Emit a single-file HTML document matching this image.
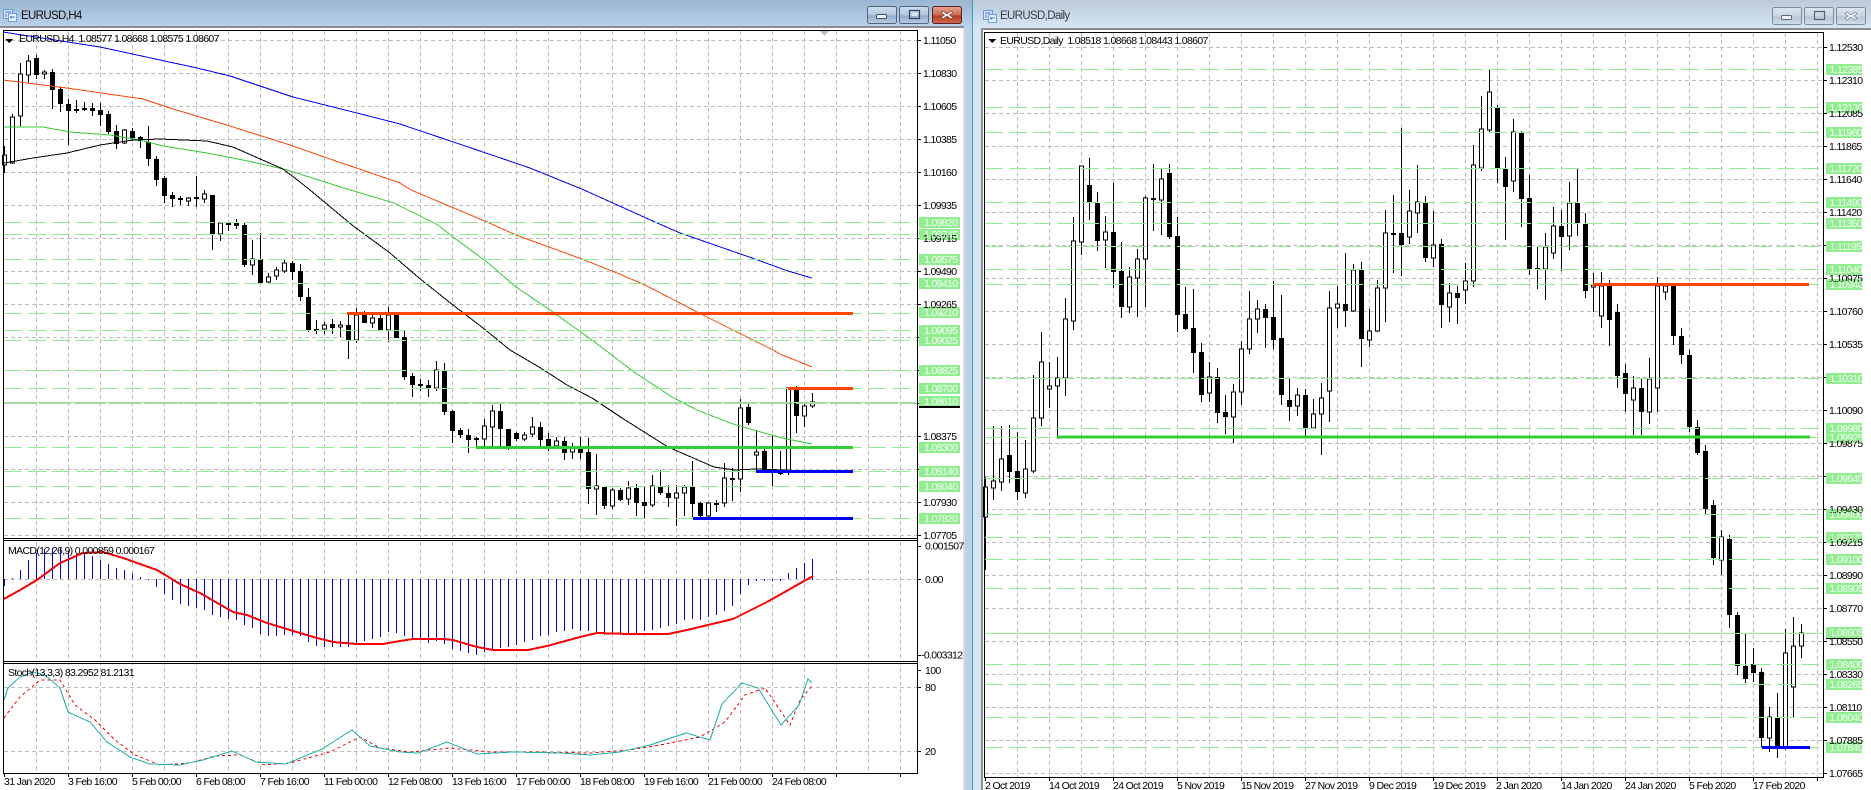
<!DOCTYPE html>
<html><head><meta charset="utf-8"><title>EURUSD</title>
<style>
html,body{margin:0;padding:0;background:#fff;width:1871px;height:790px;overflow:hidden}
svg{display:block}
text{font-family:"Liberation Sans",sans-serif;font-size:10.5px;letter-spacing:-.65px;fill:#000;white-space:pre}
.t{font-size:11.5px;letter-spacing:-.65px}
.g{fill:#f4fff4}
</style></head><body>
<svg width="1871" height="790" viewBox="0 0 1871 790" xmlns="http://www.w3.org/2000/svg">
<defs>
<linearGradient id="a" x1="0" y1="0" x2="0" y2="1"><stop offset="0" stop-color="#9cb5d0"/><stop offset="1" stop-color="#b9d1ea"/></linearGradient>
<linearGradient id="b" x1="0" y1="0" x2="0" y2="1"><stop offset="0" stop-color="#bbc9d9"/><stop offset="1" stop-color="#d6e5f3"/></linearGradient>
<linearGradient id="c" x1="0" y1="0" x2="0" y2="1"><stop offset="0" stop-color="#cfdeee"/><stop offset=".5" stop-color="#b0c6de"/><stop offset=".55" stop-color="#93acc8"/><stop offset="1" stop-color="#b5cce4"/></linearGradient>
<linearGradient id="d" x1="0" y1="0" x2="0" y2="1"><stop offset="0" stop-color="#e6a593"/><stop offset=".5" stop-color="#cf6a50"/><stop offset=".55" stop-color="#b83d20"/><stop offset="1" stop-color="#d0674c"/></linearGradient>
<linearGradient id="e" x1="0" y1="0" x2="0" y2="1"><stop offset="0" stop-color="#dde6ef"/><stop offset=".5" stop-color="#c8d5e2"/><stop offset=".55" stop-color="#b8c7d6"/><stop offset="1" stop-color="#d2dfeb"/></linearGradient>
</defs>

<!-- window chrome -->
<rect width="1871" height="790" fill="#fff"/>
<rect x="0" y="0" width="972" height="790" fill="#b9d1ea"/>
<rect x="0" y="0" width="972" height="27" fill="url(#a)"/>
<rect x="973" y="0" width="898" height="790" fill="#d5e4f2"/>
<rect x="973" y="0" width="898" height="28" fill="url(#b)"/>
<rect x="972" y="0" width="1" height="790" fill="#3aa0b8"/>
<rect x="0" y="27" width="964" height="763" fill="#fff"/>
<rect x="0" y="26" width="964" height="2" fill="#8c8c8c"/>
<rect x="963" y="28" width="2" height="762" fill="#dcdcdc"/>
<rect x="981" y="28" width="890" height="762" fill="#fff"/>
<rect x="981" y="28" width="890" height="2" fill="#8c8c8c"/>
<rect x="981" y="28" width="2" height="762" fill="#8c8c8c"/>

<!-- title left -->
<g shape-rendering="crispEdges">
<rect x="3.5" y="9.5" width="9" height="9" fill="#d5e6f8" stroke="#6f9bd8"/>
<rect x="8.5" y="13.5" width="8" height="8" fill="#e8f2fc" stroke="#6f9bd8"/>
<path d="M5 12h6M10 17h5M6 14v3M11 16v3" stroke="#4a78c8" fill="none"/>
</g>
<text class="t" x="21" y="19" style="fill:#111">EURUSD,H4</text>
<rect x="867.5" y="6.5" width="29" height="17" rx="2" fill="url(#c)" stroke="#52647c"/>
<rect x="876.5" y="14.5" width="10" height="4" rx="1" fill="#eef3f8" stroke="#3e4f66"/>
<rect x="899.5" y="6.5" width="29" height="17" rx="2" fill="url(#c)" stroke="#52647c"/>
<rect x="909.5" y="10.5" width="10" height="8" fill="none" stroke="#33445a" stroke-width="1.2"/>
<rect x="911.5" y="13" width="6" height="3" fill="#dfe8f2"/>
<rect x="932.5" y="6.5" width="29" height="17" rx="2" fill="url(#d)" stroke="#5c2222"/>
<path d="M943 11l4 3 4-3 2 1.5-3.5 2.5 3.5 2.5-2 1.5-4-3-4 3-2-1.5 3.5-2.5-3.5-2.5z" fill="#fff" stroke="#6a2b20" stroke-width=".6"/>

<!-- title right -->
<g shape-rendering="crispEdges">
<rect x="983.5" y="10.5" width="9" height="9" fill="#d5e6f8" stroke="#6f9bd8"/>
<rect x="988.5" y="14.5" width="8" height="8" fill="#e8f2fc" stroke="#6f9bd8"/>
<path d="M985 13h6M990 18h5M986 15v3M991 17v3" stroke="#4a78c8" fill="none"/>
</g>
<text class="t" x="1000" y="19" style="fill:#3a3f45">EURUSD,Daily</text>
<rect x="1772.5" y="7.5" width="29" height="17" rx="2" fill="url(#e)" stroke="#7d8b9a"/>
<rect x="1781.5" y="15.5" width="10" height="4" rx="1" fill="#f2f5f8" stroke="#5d6b7a"/>
<rect x="1804.5" y="7.5" width="29" height="17" rx="2" fill="url(#e)" stroke="#7d8b9a"/>
<rect x="1814.5" y="11.5" width="10" height="8" fill="none" stroke="#55626f" stroke-width="1.2"/>
<rect x="1836.5" y="7.5" width="29" height="17" rx="2" fill="url(#e)" stroke="#7d8b9a"/>
<path d="M1847 12l4 3 4-3 2 1.5-3.5 2.5 3.5 2.5-2 1.5-4-3-4 3-2-1.5 3.5-2.5-3.5-2.5z" fill="#fff" stroke="#66727e" stroke-width=".6"/>

<g shape-rendering="crispEdges" fill="none">

<!-- LEFT grid -->
<path stroke="#bcbcbc" stroke-dasharray="4 3" d="M4 40.5H917M4 73.5H917M4 106.5H917M4 139.5H917M4 172.5H917M4 205.5H917M4 238.5H917M4 271.5H917M4 304.5H917M4 337.5H917M4 370.5H917M4 403.5H917M4 436.5H917M4 469.5H917M4 502.5H917M4 535.5H917M4 579.5H917M4 687.5H917M4 751.5H917"/>
<path stroke="#bcbcbc" stroke-dasharray="4 3" d="M36.5 31V773M68.5 31V773M100.5 31V773M132.5 31V773M164.5 31V773M196.5 31V773M228.5 31V773M260.5 31V773M292.5 31V773M324.5 31V773M356.5 31V773M388.5 31V773M420.5 31V773M452.5 31V773M484.5 31V773M516.5 31V773M548.5 31V773M580.5 31V773M612.5 31V773M644.5 31V773M676.5 31V773M708.5 31V773M740.5 31V773M772.5 31V773M804.5 31V773M836.5 31V773M868.5 31V773M900.5 31V773"/>

<!-- LEFT wicks -->
<path stroke="#000" d="M4.5 146V173M12.5 114V164M20.5 63V126M28.5 55V83M36.5 55V79M44.5 70V79M52.5 69V109M60.5 87V112M68.5 99V145M76.5 100V113M84.5 102V111M92.5 103V116M100.5 103V126M108.5 111V134M116.5 125V149M124.5 129V144M132.5 128V141M140.5 136V148M148.5 126V166M156.5 156V186M164.5 176V203M172.5 192V207M180.5 196V205M188.5 197V206M196.5 176V207M204.5 190V203M212.5 195V250M220.5 223V241M228.5 223V231M236.5 219V229M244.5 223V267M252.5 240V275M260.5 233V283M268.5 273V283M276.5 267V280M284.5 260V273M292.5 261V280M300.5 264V301M308.5 288V332M316.5 320V334M324.5 322V334M332.5 319V334M340.5 321V337M348.5 313V359M356.5 308V343M364.5 311V323M372.5 315V328M380.5 315V330M388.5 307V342M396.5 312V338M404.5 330V380M412.5 373V397M420.5 379V391M428.5 380V397M436.5 361V391M444.5 363V415M452.5 410V443M460.5 428V438M468.5 429V453M476.5 437V447M484.5 419V447M492.5 405V447M500.5 402V447M508.5 429V450M516.5 432V441M524.5 432V441M532.5 417V437M540.5 422V447M548.5 433V451M556.5 437V447M564.5 437V460M572.5 443V459M580.5 437V459M588.5 438V504M596.5 454V515M604.5 487V509M612.5 488V509M620.5 488V501M628.5 481V505M636.5 484V516M644.5 487V519M652.5 475V507M660.5 470V495M668.5 485V507M676.5 485V526M684.5 485V516M692.5 461V517M700.5 502V518M708.5 502V517M716.5 500V512M724.5 463V507M732.5 468V501M740.5 399V492M748.5 402V425M756.5 431V471M764.5 449V471M772.5 435V486M780.5 451V475M788.5 388V475M796.5 386V433M804.5 402V427M812.5 393V408"/>
<!-- LEFT white bodies -->
<path fill="#fff" stroke="#000" d="M2.5 155h4v10h-4zM10.5 117h4v46h-4zM18.5 74h4v42h-4zM26.5 61h4v14h-4zM42.5 72h4v2h-4zM122.5 130h4v13h-4zM186.5 198h4v3h-4zM202.5 194h4v5h-4zM218.5 223h4v11h-4zM250.5 259h4v6h-4zM266.5 277h4v5h-4zM274.5 270h4v6h-4zM282.5 263h4v8h-4zM322.5 325h4v4h-4zM338.5 325h4v2h-4zM354.5 315h4v25h-4zM370.5 318h4v5h-4zM386.5 315h4v15h-4zM434.5 370h4v18h-4zM482.5 426h4v13h-4zM490.5 411h4v16h-4zM522.5 435h4v4h-4zM530.5 427h4v7h-4zM554.5 441h4v5h-4zM570.5 447h4v5h-4zM594.5 486h4v3h-4zM610.5 490h4v16h-4zM626.5 488h4v11h-4zM650.5 486h4v19h-4zM674.5 493h4v5h-4zM682.5 487h4v6h-4zM706.5 503h4v13h-4zM722.5 478h4v25h-4zM738.5 408h4v71h-4zM754.5 452h4v3h-4zM786.5 388h4v83h-4zM802.5 406h4v10h-4zM810.5 402h4v4h-4z"/>
<!-- LEFT black bodies -->
<path stroke="#000" stroke-width="5" d="M36.5 58V75M52.5 72V90M60.5 89V104M68.5 104V111M76.5 109V111M84.5 108V110M92.5 108V111M100.5 110V115M108.5 114V132M116.5 131V144M132.5 131V138M140.5 137V141M148.5 142V159M156.5 159V180M164.5 178V196M172.5 195V199M180.5 198V200M196.5 197V199M212.5 195V234M228.5 223V225M236.5 223V226M244.5 225V265M260.5 259V283M292.5 263V272M300.5 271V297M308.5 297V330M316.5 329V331M332.5 324V328M348.5 325V340M364.5 315V323M380.5 318V330M396.5 315V338M404.5 337V377M412.5 376V385M420.5 384V386M428.5 385V388M444.5 371V412M452.5 411V431M460.5 430V435M468.5 435V440M476.5 438V440M500.5 411V429M508.5 429V447M516.5 433V439M540.5 427V440M548.5 439V447M564.5 441V453M580.5 447V453M588.5 452V489M604.5 487V506M620.5 490V500M636.5 488V503M644.5 502V506M660.5 487V493M668.5 493V498M692.5 487V504M700.5 503V516M716.5 503V505M732.5 478V480M748.5 407V423M764.5 451V471M772.5 470V472M780.5 472V474M796.5 389V416"/>

<!-- LEFT MAs -->
<path stroke="#0000ff" d="M3 32L100 47L197 68L230 76L293 97L353 112L400 124L477 150L530 168L584 190L655 222L680 233L752 258L788 271L812 278"/>
<path stroke="#ff4500" d="M3 80L27 83L67 88L143 99L173 109L230 126L290 145L333 160L400 183L411 190L487 222L516 235L582 259L617 273L645 285L699 313L737 332L773 350L780 354L812 367"/>
<path stroke="#32cd32" d="M3 127L43 127L70 132L110 135L140 140L163 146L207 153L253 162L287 170L347 189L394 203L438 225L453 237L487 262L516 287L550 310L592 340L634 372L672 397L697 410L733 424L782 438L812 444"/>
<path stroke="#000" d="M4 163L33 158L67 153L100 145L133 140L160 139L207 141L233 147L283 169L300 182L310 190L352 225L390 253L419 278L453 305L483 328L510 350L539 367L567 385L592 398L622 418L668 447L714 467L735 470L756 469L812 471"/>

<!-- LEFT levels -->
<path stroke="#90ee90" stroke-dasharray="18 6" d="M4 222.5H917M4 234.5H917M4 259.5H917M4 283.5H917M4 313.5H917M4 330.5H917M4 340.5H917M4 370.5H917M4 388.5H917M4 486.5H917M4 518.5H917M4 447.5H917M4 471.5H917"/>
<path stroke="#90ee90" d="M4 402.5H917"/>
<path stroke="#c0c0c0" d="M4 403.5H917" stroke-dasharray="30 6"/>
<path stroke="#ff4500" stroke-width="3" d="M347 313.5H853M788 388.5H853"/>
<path stroke="#32cd32" stroke-width="3" d="M476 447.5H853"/>
<path stroke="#0000ff" stroke-width="3" d="M756 471.5H853M693 518.5H853"/>

<!-- MACD -->
<path stroke="#0000ff" d="M4.5 579V586M12.5 579V578M20.5 579V570M28.5 579V560M36.5 579V553M44.5 579V549M52.5 579V548M60.5 579V548M68.5 579V551M76.5 579V554M84.5 579V553M92.5 579V556M100.5 579V560M108.5 579V564M116.5 579V568M124.5 579V570M132.5 579V574M140.5 579V577M148.5 579V580M156.5 579V587M164.5 579V594M172.5 579V600M180.5 579V604M188.5 579V606M196.5 579V608M204.5 579V610M212.5 579V615M220.5 579V617M228.5 579V619M236.5 579V620M244.5 579V625M252.5 579V628M260.5 579V634M268.5 579V636M276.5 579V636M284.5 579V635M292.5 579V635M300.5 579V636M308.5 579V642M316.5 579V646M324.5 579V647M332.5 579V647M340.5 579V647M348.5 579V647M356.5 579V644M364.5 579V641M372.5 579V639M380.5 579V637M388.5 579V632M396.5 579V633M404.5 579V636M412.5 579V639M420.5 579V640M428.5 579V643M436.5 579V641M444.5 579V644M452.5 579V649M460.5 579V651M468.5 579V653M476.5 579V655M484.5 579V652M492.5 579V650M500.5 579V648M508.5 579V647M516.5 579V645M524.5 579V642M532.5 579V640M540.5 579V636M548.5 579V635M556.5 579V632M564.5 579V631M572.5 579V629M580.5 579V631M588.5 579V631M596.5 579V633M604.5 579V635M612.5 579V633M620.5 579V635M628.5 579V633M636.5 579V633M644.5 579V631M652.5 579V630M660.5 579V628M668.5 579V626M676.5 579V624M684.5 579V620M692.5 579V619M700.5 579V620M708.5 579V617M716.5 579V615M724.5 579V611M732.5 579V606M740.5 579V594M748.5 579V585M756.5 579V581M764.5 579V581M772.5 579V581M780.5 579V581M788.5 579V573M796.5 579V568M804.5 579V563M812.5 580V559"/>
<path stroke="#ff0000" stroke-width="2" d="M4 599L20 590L37 580L60 563L83 553L103 552L123 558L157 570L180 584L200 593L233 612L247 615L267 623L290 630L317 638L333 642L357 644L383 644L400 641L413 639L443 639L453 640L477 647L493 650L528 650L547 646L580 637L597 633L630 634L668 634L687 630L733 619L767 602L790 589L813 576"/>

<!-- Stoch -->
<path stroke="#ff0000" stroke-dasharray="3 3" d="M4 718L20 697L40 680L60 680L75 705L95 720L115 740L135 755L160 765L190 763L215 756L240 755L265 765L290 763L330 752L360 737L380 748L410 752L450 748L490 752L530 752L590 753L630 750L660 745L700 737L725 722L745 695L765 688L790 725L800 700L812 686"/>
<path stroke="#20b2aa" d="M4 700L8 688L20 677L33 672L45 675L60 688L68 712L90 722L107 742L130 757L150 764L180 765L203 760L232 751L256 762L286 764L322 749L352 730L370 746L400 752L418 753L447 742L477 754L513 752L560 753L590 755L620 752L650 745L686 733L710 740L722 704L742 683L758 688L781 725L799 705L808 679L812 683"/>

<!-- LEFT frame -->
<path stroke="#000" d="M3.5 30V773M3 30.5H918M917.5 30V773M3 538.5H918M3 540.5H918M3 661.5H918M3 663.5H918M3 773.5H918"/>
<path stroke="#000" d="M917 40.5h4M917 73.5h4M917 106.5h4M917 139.5h4M917 172.5h4M917 205.5h4M917 238.5h4M917 271.5h4M917 304.5h4M917 337.5h4M917 370.5h4M917 403.5h4M917 436.5h4M917 469.5h4M917 502.5h4M917 535.5h4M917 546.5h4M917 579.5h4M917 655.5h4M917 670.5h4M917 687.5h4M917 751.5h4M4.5 773v4M68.5 773v4M132.5 773v4M196.5 773v4M260.5 773v4M324.5 773v4M388.5 773v4M452.5 773v4M516.5 773v4M580.5 773v4M644.5 773v4M708.5 773v4M772.5 773v4M836.5 773v4M900.5 773v4"/>
<path d="M820 31h9l-4.5 5z" fill="#bdbdbd"/>

<!-- RIGHT grid -->
<path stroke="#bcbcbc" stroke-dasharray="4 3" d="M985 47.5H1823M985 80.5H1823M985 113.5H1823M985 146.5H1823M985 179.5H1823M985 212.5H1823M985 245.5H1823M985 278.5H1823M985 311.5H1823M985 344.5H1823M985 377.5H1823M985 410.5H1823M985 443.5H1823M985 476.5H1823M985 509.5H1823M985 542.5H1823M985 575.5H1823M985 608.5H1823M985 641.5H1823M985 674.5H1823M985 707.5H1823M985 740.5H1823M985 773.5H1823"/>
<path stroke="#bcbcbc" stroke-dasharray="4 3" d="M1017.5 33V777M1049.5 33V777M1081.5 33V777M1113.5 33V777M1145.5 33V777M1177.5 33V777M1209.5 33V777M1241.5 33V777M1273.5 33V777M1305.5 33V777M1337.5 33V777M1369.5 33V777M1401.5 33V777M1433.5 33V777M1465.5 33V777M1497.5 33V777M1529.5 33V777M1561.5 33V777M1593.5 33V777M1625.5 33V777M1657.5 33V777M1689.5 33V777M1721.5 33V777M1753.5 33V777M1785.5 33V777M1817.5 33V777"/>

<!-- RIGHT wicks -->
<path stroke="#000" d="M985.5 477V570M993.5 426V500M1001.5 426V491M1009.5 425V483M1017.5 432V500M1025.5 440V498M1033.5 375V473M1041.5 332V426M1049.5 362V408M1057.5 357V439M1065.5 298V396M1073.5 217V330M1081.5 166V255M1089.5 158V220M1097.5 192V251M1105.5 216V268M1113.5 183V288M1121.5 242V318M1129.5 267V313M1137.5 249V317M1145.5 196V307M1153.5 164V231M1161.5 169V235M1169.5 164V239M1177.5 217V332M1185.5 287V330M1193.5 289V373M1201.5 343V402M1209.5 362V402M1217.5 368V423M1225.5 395V434M1233.5 384V443M1241.5 341V405M1249.5 291V354M1257.5 300V333M1265.5 304V348M1273.5 281V349M1281.5 295V405M1289.5 379V421M1297.5 388V416M1305.5 389V437M1313.5 399V428M1321.5 383V455M1329.5 291V422M1337.5 286V328M1345.5 253V327M1353.5 264V312M1361.5 262V367M1369.5 309V347M1377.5 280V332M1385.5 210V322M1393.5 195V273M1401.5 128V276M1409.5 190V244M1417.5 165V233M1425.5 196V262M1433.5 211V267M1441.5 239V328M1449.5 283V322M1457.5 286V324M1465.5 263V304M1473.5 145V287M1481.5 96V171M1489.5 70V132M1497.5 105V183M1505.5 157V240M1513.5 119V192M1521.5 131V227M1529.5 175V275M1537.5 247V289M1545.5 233V300M1553.5 207V259M1561.5 210V271M1569.5 182V250M1577.5 169V236M1585.5 213V298M1593.5 273V312M1601.5 272V328M1609.5 280V346M1617.5 304V388M1625.5 364V412M1633.5 376V435M1641.5 379V435M1649.5 358V424M1657.5 277V412M1665.5 283V300M1673.5 283V345M1681.5 328V364M1689.5 350V432M1697.5 420V455M1705.5 445V515M1713.5 500V565M1721.5 530V575M1729.5 535V628M1737.5 612V675M1745.5 633V683M1753.5 648V682M1761.5 668V747M1769.5 707V752M1777.5 693V758M1785.5 629V750M1793.5 617V717M1801.5 624V658"/>
<!-- RIGHT white bodies -->
<path fill="#fff" stroke="#000" d="M983.5 487h4v30h-4zM991.5 481h4v7h-4zM999.5 459h4v23h-4zM1023.5 469h4v24h-4zM1031.5 418h4v53h-4zM1039.5 362h4v56h-4zM1047.5 386h4v3h-4zM1055.5 378h4v8h-4zM1063.5 319h4v59h-4zM1071.5 241h4v80h-4zM1079.5 166h4v76h-4zM1103.5 232h4v8h-4zM1127.5 277h4v30h-4zM1135.5 259h4v19h-4zM1143.5 198h4v61h-4zM1159.5 179h4v21h-4zM1207.5 377h4v16h-4zM1231.5 392h4v25h-4zM1239.5 349h4v43h-4zM1247.5 319h4v30h-4zM1255.5 309h4v10h-4zM1295.5 395h4v11h-4zM1311.5 414h4v14h-4zM1319.5 398h4v16h-4zM1327.5 308h4v83h-4zM1335.5 304h4v4h-4zM1351.5 270h4v41h-4zM1367.5 331h4v9h-4zM1375.5 288h4v43h-4zM1383.5 233h4v55h-4zM1407.5 211h4v26h-4zM1415.5 202h4v11h-4zM1431.5 245h4v13h-4zM1447.5 293h4v14h-4zM1463.5 281h4v9h-4zM1471.5 165h4v116h-4zM1479.5 129h4v39h-4zM1487.5 92h4v38h-4zM1511.5 132h4v49h-4zM1543.5 247h4v22h-4zM1551.5 226h4v27h-4zM1567.5 203h4v33h-4zM1591.5 285h4v2h-4zM1599.5 286h4v30h-4zM1631.5 388h4v12h-4zM1647.5 379h4v33h-4zM1655.5 286h4v102h-4zM1663.5 286h4v6h-4zM1719.5 537h4v23h-4zM1767.5 717h4v21h-4zM1783.5 653h4v94h-4zM1791.5 646h4v41h-4zM1799.5 633h4v13h-4z"/>
<!-- RIGHT black bodies -->
<path stroke="#000" stroke-width="5" d="M1009.5 455V472M1017.5 471V492M1089.5 185V203M1097.5 203V241M1113.5 232V272M1121.5 271V307M1153.5 198V200M1169.5 173V237M1177.5 236V315M1185.5 314V329M1193.5 328V353M1201.5 352V395M1217.5 377V413M1225.5 412V417M1265.5 309V318M1273.5 317V340M1281.5 338V395M1289.5 400V407M1305.5 395V428M1345.5 304V311M1361.5 270V339M1393.5 233V235M1401.5 233V245M1425.5 203V258M1441.5 244V305M1457.5 293V298M1497.5 108V169M1505.5 169V187M1521.5 133V199M1529.5 198V269M1537.5 268V269M1561.5 226V237M1577.5 203V223M1585.5 224V291M1609.5 286V320M1617.5 312V376M1625.5 373V394M1641.5 388V412M1673.5 286V336M1681.5 336V355M1689.5 355V427M1697.5 427V453M1705.5 451V509M1713.5 505V558M1729.5 539V615M1737.5 615V666M1745.5 666V679M1753.5 664V673M1761.5 672V738M1777.5 718V747"/>

<!-- RIGHT levels -->
<path stroke="#90ee90" stroke-dasharray="18 6" d="M985 69.5H1823M985 107.5H1823M985 132.5H1823M985 168.5H1823M985 202.5H1823M985 223.5H1823M985 246.5H1823M985 269.5H1823M985 284.5H1823M985 378.5H1823M985 428.5H1823M985 437.5H1823M985 478.5H1823M985 514.5H1823M985 537.5H1823M985 559.5H1823M985 588.5H1823M985 664.5H1823M985 684.5H1823M985 717.5H1823M985 747.5H1823"/>
<path stroke="#90ee90" d="M985 633.5H1823"/>
<path stroke="#ff4500" stroke-width="3" d="M1593 284.5H1809"/>
<path stroke="#32cd32" stroke-width="3" d="M1057 437H1810"/>
<path stroke="#0000ff" stroke-width="3" d="M1762 747.5H1810"/>

<!-- RIGHT frame -->
<path stroke="#000" d="M984.5 32V777M984 32.5H1824M1823.5 32V777M984 777.5H1824"/>
<path stroke="#000" d="M1823 47.5h4M1823 80.5h4M1823 113.5h4M1823 146.5h4M1823 179.5h4M1823 212.5h4M1823 245.5h4M1823 278.5h4M1823 311.5h4M1823 344.5h4M1823 377.5h4M1823 410.5h4M1823 443.5h4M1823 476.5h4M1823 509.5h4M1823 542.5h4M1823 575.5h4M1823 608.5h4M1823 641.5h4M1823 674.5h4M1823 707.5h4M1823 740.5h4M1823 773.5h4M985.5 777v4M1049.5 777v4M1113.5 777v4M1177.5 777v4M1241.5 777v4M1305.5 777v4M1369.5 777v4M1433.5 777v4M1497.5 777v4M1561.5 777v4M1625.5 777v4M1689.5 777v4M1753.5 777v4M1817.5 777v4"/>

<!-- label boxes left -->
<path fill="#90ee90" d="M919 217h41v11h-41zM919 229h41v11h-41zM919 254h41v11h-41zM919 278h41v11h-41zM919 307h41v11h-41zM919 325h41v11h-41zM919 335h41v11h-41zM919 365h41v11h-41zM919 383h41v11h-41zM919 396h41v11h-41zM919 442h41v11h-41zM919 466h41v11h-41zM919 481h41v11h-41zM919 513h41v11h-41z"/>
<rect x="919" y="406" width="41" height="2" fill="#000"/>
<!-- label boxes right -->
<path fill="#90ee90" d="M1826 64h36v11h-36zM1826 102h36v11h-36zM1826 127h36v11h-36zM1826 163h36v11h-36zM1826 197h36v11h-36zM1826 218h36v11h-36zM1826 241h36v11h-36zM1826 264h36v11h-36zM1826 279h36v11h-36zM1826 373h36v11h-36zM1826 423h36v11h-36zM1826 432h36v11h-36zM1826 473h36v11h-36zM1826 509h36v11h-36zM1826 532h36v11h-36zM1826 554h36v11h-36zM1826 583h36v11h-36zM1826 627h36v11h-36zM1826 659h36v11h-36zM1826 679h36v11h-36zM1826 712h36v11h-36zM1826 742h36v11h-36z"/>
<rect x="1826" y="638" width="36" height="1" fill="#000"/>
<path d="M5 39h8l-4 4z" fill="#000"/>
<path d="M988 39h8l-4 4z" fill="#000"/>
</g>

<!-- header text -->
<text x="19" y="42">EURUSD,H4  1.08577 1.08668 1.08575 1.08607</text>
<text x="1000" y="44">EURUSD,Daily  1.08518 1.08668 1.08443 1.08607</text>
<text x="8" y="554">MACD(12,26,9) 0.000859 0.000167</text>
<text x="8" y="676">Stoch(13,3,3) 83.2952 81.2131</text>

<!-- left axis -->
<text x="923" y="44">1.11050</text><text x="923" y="77">1.10830</text><text x="923" y="110">1.10605</text><text x="923" y="143">1.10385</text><text x="923" y="176">1.10160</text><text x="923" y="209">1.09935</text><text x="923" y="242">1.09715</text><text x="923" y="275">1.09490</text><text x="923" y="308">1.09265</text><text x="923" y="440">1.08375</text><text x="923" y="506">1.07930</text><text x="923" y="539">1.07705</text>
<text x="925" y="549.5">0.001507</text><text x="925" y="583">0.00</text><text x="921" y="658.5">-0.003312</text>
<text x="925" y="674">100</text><text x="925" y="691">80</text><text x="925" y="755">20</text>
<g class="lb">
<text class="g" x="924" y="226">1.09820</text><text class="g" x="924" y="238">1.09745</text><text class="g" x="924" y="263">1.09575</text><text class="g" x="924" y="287">1.09410</text><text class="g" x="924" y="316">1.09210</text><text class="g" x="924" y="334">1.09095</text><text class="g" x="924" y="344">1.09025</text><text class="g" x="924" y="374">1.08825</text><text class="g" x="924" y="392">1.08700</text><text class="g" x="924" y="405">1.08610</text><text class="g" x="924" y="451">1.08300</text><text class="g" x="924" y="475">1.08140</text><text class="g" x="924" y="490">1.08040</text><text class="g" x="924" y="522">1.07820</text>
</g>

<!-- right axis -->
<text x="1829" y="51">1.12530</text><text x="1829" y="84">1.12310</text><text x="1829" y="117">1.12085</text><text x="1829" y="150">1.11865</text><text x="1829" y="183">1.11640</text><text x="1829" y="216">1.11420</text><text x="1829" y="282">1.10975</text><text x="1829" y="315">1.10760</text><text x="1829" y="348">1.10535</text><text x="1829" y="414">1.10090</text><text x="1829" y="447">1.09875</text><text x="1829" y="513">1.09430</text><text x="1829" y="546">1.09215</text><text x="1829" y="579">1.08990</text><text x="1829" y="612">1.08770</text><text x="1829" y="645">1.08550</text><text x="1829" y="678">1.08330</text><text x="1829" y="711">1.08110</text><text x="1829" y="744">1.07885</text><text x="1829" y="777">1.07665</text>
<g>
<text class="g" x="1829.5" y="73">1.12385</text><text class="g" x="1829.5" y="111">1.12130</text><text class="g" x="1829.5" y="136">1.11960</text><text class="g" x="1829.5" y="172">1.11720</text><text class="g" x="1829.5" y="206">1.11490</text><text class="g" x="1829.5" y="227">1.11350</text><text class="g" x="1829.5" y="250">1.11195</text><text class="g" x="1829.5" y="273">1.11040</text><text class="g" x="1829.5" y="288">1.10940</text><text class="g" x="1829.5" y="382">1.10310</text><text class="g" x="1829.5" y="432">1.09980</text><text class="g" x="1829.5" y="441">1.09925</text><text class="g" x="1829.5" y="482">1.09640</text><text class="g" x="1829.5" y="518">1.09400</text><text class="g" x="1829.5" y="541">1.09270</text><text class="g" x="1829.5" y="563">1.09100</text><text class="g" x="1829.5" y="592">1.08905</text><text class="g" x="1829.5" y="636">1.08605</text><text class="g" x="1829.5" y="668">1.08400</text><text class="g" x="1829.5" y="688">1.08265</text><text class="g" x="1829.5" y="721">1.08040</text><text class="g" x="1829.5" y="751">1.07840</text>
</g>

<!-- left dates -->
<text x="4" y="785">31 Jan 2020</text><text x="68" y="785">3 Feb 16:00</text><text x="132" y="785">5 Feb 00:00</text><text x="196" y="785">6 Feb 08:00</text><text x="260" y="785">7 Feb 16:00</text><text x="324" y="785">11 Feb 00:00</text><text x="388" y="785">12 Feb 08:00</text><text x="452" y="785">13 Feb 16:00</text><text x="516" y="785">17 Feb 00:00</text><text x="580" y="785">18 Feb 08:00</text><text x="644" y="785">19 Feb 16:00</text><text x="708" y="785">21 Feb 00:00</text><text x="772" y="785">24 Feb 08:00</text>
<!-- right dates -->
<text x="985" y="789">2 Oct 2019</text><text x="1049" y="789">14 Oct 2019</text><text x="1113" y="789">24 Oct 2019</text><text x="1177" y="789">5 Nov 2019</text><text x="1241" y="789">15 Nov 2019</text><text x="1305" y="789">27 Nov 2019</text><text x="1369" y="789">9 Dec 2019</text><text x="1433" y="789">19 Dec 2019</text><text x="1496" y="789">2 Jan 2020</text><text x="1561" y="789">14 Jan 2020</text><text x="1625" y="789">24 Jan 2020</text><text x="1689" y="789">5 Feb 2020</text><text x="1753" y="789">17 Feb 2020</text>
</svg>
</body></html>
